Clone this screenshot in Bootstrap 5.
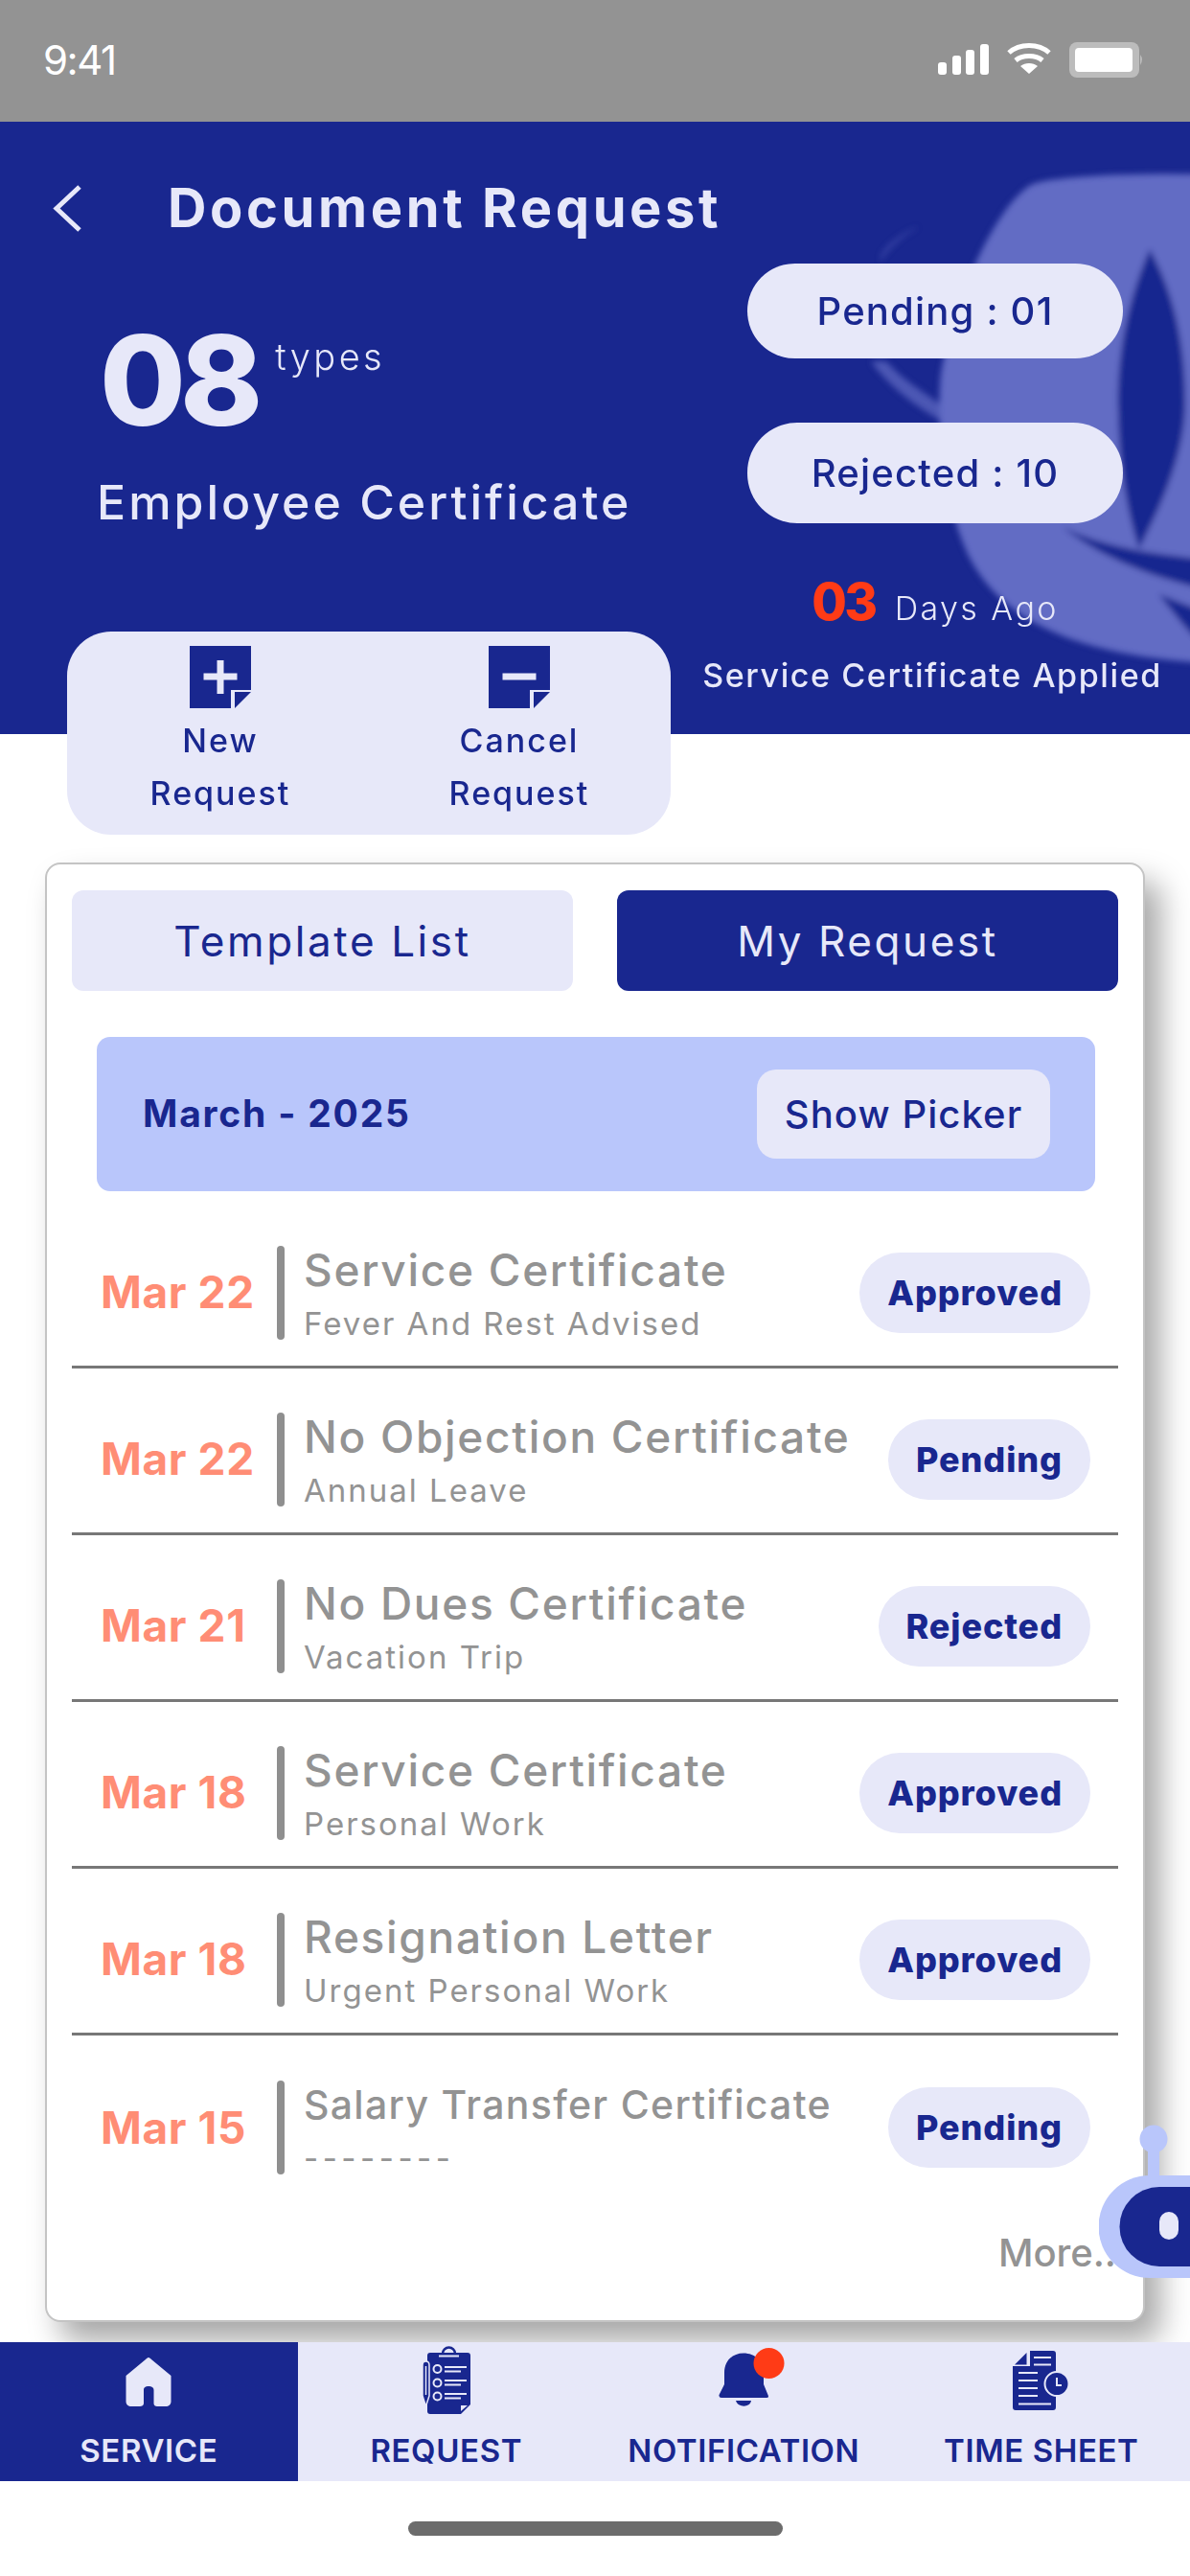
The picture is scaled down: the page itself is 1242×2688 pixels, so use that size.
<!DOCTYPE html>
<html lang="en">
<head>
    <meta charset="UTF-8">
    <meta name="viewport" content="width=device-width, initial-scale=1.0">
    <title>Document Request</title>
    <link href="https://cdn.jsdelivr.net/npm/bootstrap@5.3.0/dist/css/bootstrap.min.css" rel="stylesheet">
    <style>
        html, body { margin: 0; background: #fff; }
        body { font-family: "Inter", "Liberation Sans", sans-serif; color: #19278f; }
        .screen { width: 1242px; height: 2688px; position: relative; overflow: hidden; background: #fff; }

        .status-strip { height: 127px; background: #939393; padding: 0 48px 0 45px; color: #fff; }
        .status-time { font-size: 42px; font-weight: 400; line-height: 1; letter-spacing: -1.5px; margin-top: -2px; }

        .hero { height: 639px; background: #19278f; position: relative; padding: 65px 23px 0 55px; color: #e7e8f9; }
        .hero-mark { position: absolute; top: 0; right: 0; }
        .hero-inner { position: relative; }
        .hero-title { height: 51px; gap: 90px; }
        .hero-title h1 { font-size: 56px; font-weight: 700; margin: 0; line-height: 51px; color: #e7e8f9; letter-spacing: 3.6px; }
        .types-block { margin: 91px 0 0 49px; }
        .types-num { font-size: 130px; font-weight: 800; line-height: 126px; letter-spacing: -6px; }
        .types-word { font-size: 38px; font-weight: 300; margin: 16px 0 0 19px; line-height: 44px; letter-spacing: 3.4px; }
        .types-name { font-size: 50px; font-weight: 500; margin: 34px 0 0 -3px; line-height: 60px; letter-spacing: 3px; white-space: nowrap; }
        .hero-side { width: 486px; margin-top: 32px; }
        .hero-pill { width: 392px; height: 99px; border-radius: 50px; background: #e7e8f9; color: #19278f; font-size: 40px; font-weight: 500; letter-spacing: 1.2px; }
        .hero-pill.tall { height: 105px; margin-top: 67px; border-radius: 52px; }
        .ago-line { margin-top: 57px; gap: 20px; line-height: 50px; }
        .ago-num { color: #ff3b16; font-size: 53px; font-weight: 800; letter-spacing: -2.500px; }
        .ago-text { font-size: 34px; font-weight: 300; letter-spacing: 2.4px; }
        .applied-line { font-size: 34px; font-weight: 500; margin-top: 23px; padding-right: 6px; line-height: 44px; white-space: nowrap; letter-spacing: 1.6px; }

        .action-box { width: 630px; height: 212px; margin: -107px 0 0 70px; border-radius: 46px; background: #e7e8f9; position: relative; padding: 15px 0 0 4px; }
        .action-item { width: 312px; font-size: 34px; font-weight: 500; line-height: 55px; color: #19278f; text-align: center; letter-spacing: 2px; }
        .action-item svg { display: block; margin: 0 auto 6px; }

        .req-panel { width: 1148px; height: 1523px; margin: 29px 0 0 47px; border: 2px solid #c4c4c4; border-radius: 16px; background: #fff; box-shadow: 16px 20px 32px rgba(0, 0, 0, .35); padding: 27px 26px 0; }
        .tab-row { gap: 46px; }
        .tab-btn { flex: 1; height: 105px; border: 0; border-radius: 12px; font-size: 44px; font-weight: 400; background: #e7e8f9; color: #19278f; padding: 0; letter-spacing: 2.6px; }
        .tab-btn.on { background: #19278f; color: #e7e8f9; }
        .tab-btn:hover { background: #e7e8f9; color: #19278f; }
        .tab-btn.on:hover { background: #19278f; color: #e7e8f9; }
        .month-bar { height: 161px; margin: 48px 24px 11px 26px; background: #b9c6fb; border-radius: 14px; padding: 0 47px 0 48px; }
        .month-name { font-size: 39px; font-weight: 700; letter-spacing: 1.8px; }
        .picker-btn { width: 306px; height: 93px; border: 0; border-radius: 20px; background: #e7e8f9; color: #19278f; font-size: 40px; font-weight: 500; padding: 0; letter-spacing: 1.1px; }

        .req-list { border-radius: 0; }
        .req-list .req-row { height: 174px; padding: 18px 29px 0 30px; border-width: 0 0 3px; border-style: solid; border-color: #777; background: transparent; }
        .req-date { width: 184px; font-size: 46px; font-weight: 700; color: #ff8d75; white-space: nowrap; letter-spacing: .6px; }
        .req-bar { width: 8px; height: 98px; border-radius: 4px; background: #8f8f8f; margin-right: 20px; flex: none; }
        .req-title { font-size: 46px; font-weight: 500; color: #939393; line-height: 56px; white-space: nowrap; letter-spacing: 1.7px; }
        .req-title.smaller { font-size: 41px; letter-spacing: 1.3px; }
        .req-note { font-size: 33px; font-weight: 400; color: #939393; line-height: 40px; margin-top: 8px; white-space: nowrap; letter-spacing: 2px; }
        .req-note.dashes { letter-spacing: 4.5px; }
        .state-pill { height: 84px; border-radius: 42px; background: #e7e8f9; color: #19278f; font-size: 36px; font-weight: 800; padding: 0 29px; display: flex; align-items: center; letter-spacing: .9px; }
        .more-link { font-size: 40px; font-weight: 500; color: #939393; text-align: right; line-height: 50px; margin-top: 28px; padding-right: 2px; }

        .bot-mark { position: absolute; top: 2215px; right: 0; }

        .tab-strip { height: 145px; margin-top: 21px; background: #e7e8f9; position: relative; }
        .tab-cell { flex: 1; text-align: center; color: #19278f; font-size: 33px; font-weight: 600; line-height: 46px; letter-spacing: .6px; white-space: nowrap; }
        .tab-cell svg { display: block; margin: 0 auto; }
        .tab-cell.on { background: #19278f; color: #e7e8f9; }
        .home-pill { width: 391px; height: 15px; margin: 42px auto 0; border-radius: 8px; background: #6c6c6c; }
    </style>
</head>
<body>
<div class="screen">
    <!-- status bar -->
    <div class="status-strip d-flex align-items-center justify-content-between">
        <span class="status-time">9:41</span>
        <svg width="215" height="40" viewBox="0 0 215 40">
            <g fill="#fff">
                <rect x="0" y="21" width="9" height="13" rx="3"/>
                <rect x="15" y="14" width="9" height="20" rx="3"/>
                <rect x="29" y="8" width="9" height="26" rx="3"/>
                <rect x="44" y="2" width="9" height="32" rx="3"/>
            </g>
            <g fill="none" stroke="#fff" stroke-width="5">
                <path d="M74 11 C85 1 105 1 116 11"/>
                <path d="M81 19 C88 13 102 13 109 19"/>
            </g>
            <path d="M95 33 L86 25 C91 21 99 21 104 25 Z" fill="#fff"/>
            <rect x="137" y="0" width="73" height="37" rx="8" fill="#bcbcbc"/>
            <rect x="143" y="6" width="60" height="25" rx="4" fill="#fff"/>
            <path d="M211 13 Q215 18 211 24 Z" fill="#bcbcbc"/>
        </svg>
    </div>

    <!-- header -->
    <div class="hero">
        <svg class="hero-mark" width="340" height="639" viewBox="902 127 340 639">
            <defs><filter id="soft"><feGaussianBlur stdDeviation="3"/></filter></defs>
            <g filter="url(#soft)">
                <path d="M1262 182 C1180 180 1100 184 1078 192 C1045 208 998 300 982 390 C976 460 988 530 1010 578 C1040 640 1110 684 1262 692 Z" fill="#626cc4"/>
                <path d="M1200 260 C1178 310 1165 370 1167 430 C1168 490 1178 540 1189 573 C1205 540 1237 480 1237 420 C1237 350 1222 300 1200 260 Z" fill="#19278f"/>
                <path d="M1109 550 C1140 575 1190 600 1262 616 L1262 584 C1200 578 1150 570 1109 550 Z" fill="#19278f"/>
                <path d="M1209 620 C1222 635 1235 655 1262 680 L1262 640 C1240 632 1225 626 1209 620 Z" fill="#19278f"/>
                <path d="M959 237 C942 246 928 258 919 273 C916 260 945 240 959 237 Z" fill="#626cc4" opacity=".45"/>
                <path d="M909 377 C925 400 955 425 985 440 L992 430 C975 415 945 400 925 377 Z" fill="#626cc4" opacity=".7"/>
            </g>
        </svg>
        <div class="hero-inner">
            <div class="hero-title d-flex align-items-center">
                <svg width="30" height="51" viewBox="0 0 30 51"><path d="M28 3 L4 25.5 L28 48" fill="none" stroke="#e7e8f9" stroke-width="5"/></svg>
                <h1>Document Request</h1>
            </div>
            <div class="d-flex justify-content-between">
                <div class="types-block">
                    <div class="d-flex">
                        <span class="types-num">08</span>
                        <span class="types-word">types</span>
                    </div>
                    <div class="types-name">Employee Certificate</div>
                </div>
                <div class="hero-side d-flex flex-column align-items-center">
                    <div class="hero-pill d-flex align-items-center justify-content-center">Pending : 01</div>
                    <div class="hero-pill tall d-flex align-items-center justify-content-center">Rejected : 10</div>
                    <div class="ago-line d-flex align-items-baseline">
                        <span class="ago-num">03</span>
                        <span class="ago-text">Days Ago</span>
                    </div>
                    <div class="applied-line">Service Certificate Applied</div>
                </div>
            </div>
        </div>
    </div>

    <!-- new / cancel -->
    <div class="action-box d-flex">
        <div class="action-item">
            <svg width="64" height="65" viewBox="0 0 64 65">
                <path d="M0 0 H64 V46 H43 V65 H0 Z" fill="#19278f"/>
                <path d="M47 48 H64 L47 65 Z" fill="#19278f"/>
                <path d="M14.5 32 H49.5 M32 15 V50" stroke="#e7e8f9" stroke-width="7"/>
            </svg>
            New<br>Request
        </div>
        <div class="action-item">
            <svg width="64" height="65" viewBox="0 0 64 65">
                <path d="M0 0 H64 V46 H43 V65 H0 Z" fill="#19278f"/>
                <path d="M47 48 H64 L47 65 Z" fill="#19278f"/>
                <path d="M14.5 32 H49.5" stroke="#e7e8f9" stroke-width="7"/>
            </svg>
            Cancel<br>Request
        </div>
    </div>

    <!-- list panel -->
    <div class="req-panel">
        <div class="tab-row d-flex">
            <button type="button" class="btn tab-btn">Template List</button>
            <button type="button" class="btn tab-btn on">My Request</button>
        </div>
        <div class="month-bar d-flex align-items-center justify-content-between">
            <span class="month-name">March - 2025</span>
            <button type="button" class="btn picker-btn">Show Picker</button>
        </div>
        <div class="list-group list-group-flush req-list">
            <div class="list-group-item req-row d-flex align-items-center">
                <div class="req-date">Mar 22</div><div class="req-bar"></div>
                <div class="flex-grow-1"><div class="req-title">Service Certificate</div><div class="req-note">Fever And Rest Advised</div></div>
                <div class="state-pill">Approved</div>
            </div>
            <div class="list-group-item req-row d-flex align-items-center">
                <div class="req-date">Mar 22</div><div class="req-bar"></div>
                <div class="flex-grow-1"><div class="req-title">No Objection Certificate</div><div class="req-note">Annual Leave</div></div>
                <div class="state-pill">Pending</div>
            </div>
            <div class="list-group-item req-row d-flex align-items-center">
                <div class="req-date">Mar 21</div><div class="req-bar"></div>
                <div class="flex-grow-1"><div class="req-title">No Dues Certificate</div><div class="req-note">Vacation Trip</div></div>
                <div class="state-pill">Rejected</div>
            </div>
            <div class="list-group-item req-row d-flex align-items-center">
                <div class="req-date">Mar 18</div><div class="req-bar"></div>
                <div class="flex-grow-1"><div class="req-title">Service Certificate</div><div class="req-note">Personal Work</div></div>
                <div class="state-pill">Approved</div>
            </div>
            <div class="list-group-item req-row d-flex align-items-center">
                <div class="req-date">Mar 18</div><div class="req-bar"></div>
                <div class="flex-grow-1"><div class="req-title">Resignation Letter</div><div class="req-note">Urgent Personal Work</div></div>
                <div class="state-pill">Approved</div>
            </div>
            <div class="list-group-item req-row d-flex align-items-center">
                <div class="req-date">Mar 15</div><div class="req-bar"></div>
                <div class="flex-grow-1"><div class="req-title smaller">Salary Transfer Certificate</div><div class="req-note dashes">--------</div></div>
                <div class="state-pill">Pending</div>
            </div>
        </div>
        <div class="more-link">More..</div>
    </div>

    <!-- chat bot, floats over the panel -->
    <svg class="bot-mark" width="95" height="165" viewBox="1147 2215 95 165">
        <circle cx="1204" cy="2232" r="14.5" fill="#b9c6fb"/>
        <rect x="1198" y="2240" width="12" height="35" fill="#b9c6fb"/>
        <path d="M1242 2270 H1200 A53.500 53.500 0 0 0 1200 2377 H1242 Z" fill="#b9c6fb"/>
        <path d="M1242 2282 H1210 A41.500 41.500 0 0 0 1210 2365 H1242 Z" fill="#19278f"/>
        <rect x="1210" y="2308" width="20" height="29" rx="10" fill="#e7e8f9"/>
    </svg>

    <!-- bottom tabs -->
    <div class="tab-strip d-flex">
        <div class="tab-cell on">
            <svg width="60" height="90" viewBox="0 0 60 90"><path d="M30 16 C31 16 32 17 33 18 L53.500 35 V62 C53.500 65 51 67 48 67 H39 C37 67 35.500 66 35.500 64 V50 C35.500 47 33 46 30 46 C27 46 25 47 25 50 V64 C25 66 23 67 21 67 H12 C9 67 6.500 65 6.500 62 V35 L27 18 C28 17 29 16 30 16 Z" fill="#e7e8f9"/></svg>
            SERVICE
        </div>
        <div class="tab-cell">
            <svg width="60" height="90" viewBox="36 0 60 90">
                <circle cx="68.500" cy="12" r="6.500" fill="none" stroke="#19278f" stroke-width="2.500"/>
                <path d="M49 11 H88 Q91 11 91 14 V65 L81 75 H49 Q46 75 46 72 V14 Q46 11 49 11 Z" fill="#19278f"/>
                <path d="M81 72 V66 H88 Z" fill="#e7e8f9"/>
                <path d="M58 14.500 H79" stroke="#e7e8f9" stroke-width="2"/>
                <g fill="none" stroke="#e7e8f9" stroke-width="2">
                    <path d="M64 26 H87 M64 30.500 H81 M64 40 H87 M64 44.500 H81 M64 54 H87 M64 58.500 H81"/>
                    <circle cx="56.500" cy="28" r="4"/><circle cx="56.500" cy="42.500" r="4"/><circle cx="56.500" cy="56.500" r="4"/>
                </g>
                <path d="M41 24 Q41 20 44.500 20 Q48 20 48 24 V56 L44.500 67 L41 56 Z" fill="#19278f" stroke="#e7e8f9" stroke-width="1.500"/>
                <path d="M44.500 25 V55" stroke="#e7e8f9" stroke-width="1.500"/>
            </svg>
            REQUEST
        </div>
        <div class="tab-cell">
            <svg width="100" height="90" viewBox="6 0 100 90">
                <path d="M56 11.500 C44 11.500 36 20 36 32 V44 L30.500 55 Q30 58 33 58 H80 Q83 58 81.500 55 L77 44 V32 C77 20 68 11.500 56 11.500 Z" fill="#19278f"/>
                <path d="M48 61 H64 C63 68.500 50 68.500 48 61 Z" fill="#19278f"/>
                <circle cx="82.500" cy="22" r="16" fill="#ff3b16"/>
            </svg>
            NOTIFICATION
        </div>
        <div class="tab-cell">
            <svg width="80" height="90" viewBox="25 0 80 90">
                <path d="M53 9 H77 Q80 9 80 12 V68 Q80 71 77 71 H38 Q35 71 35 68 V25 H53 Z" fill="#19278f"/>
                <path d="M49.500 11 V23.500 H37 Z" fill="#19278f"/>
                <path d="M57 16 H75 M57 23.500 H75 M41 32 H61 M41 40 H61 M41 48 H61 M41 56 H61 M41 64.500 H75" stroke="#e7e8f9" stroke-width="2.200" fill="none"/>
                <circle cx="81" cy="43.500" r="12.500" fill="#19278f" stroke="#e7e8f9" stroke-width="2"/>
                <path d="M81 37 V45 H86" fill="none" stroke="#e7e8f9" stroke-width="2"/>
            </svg>
            TIME SHEET
        </div>
    </div>
    <div class="home-pill"></div>
</div>
<script src="https://cdn.jsdelivr.net/npm/bootstrap@5.3.0/dist/js/bootstrap.bundle.min.js"></script>
</body>
</html>
